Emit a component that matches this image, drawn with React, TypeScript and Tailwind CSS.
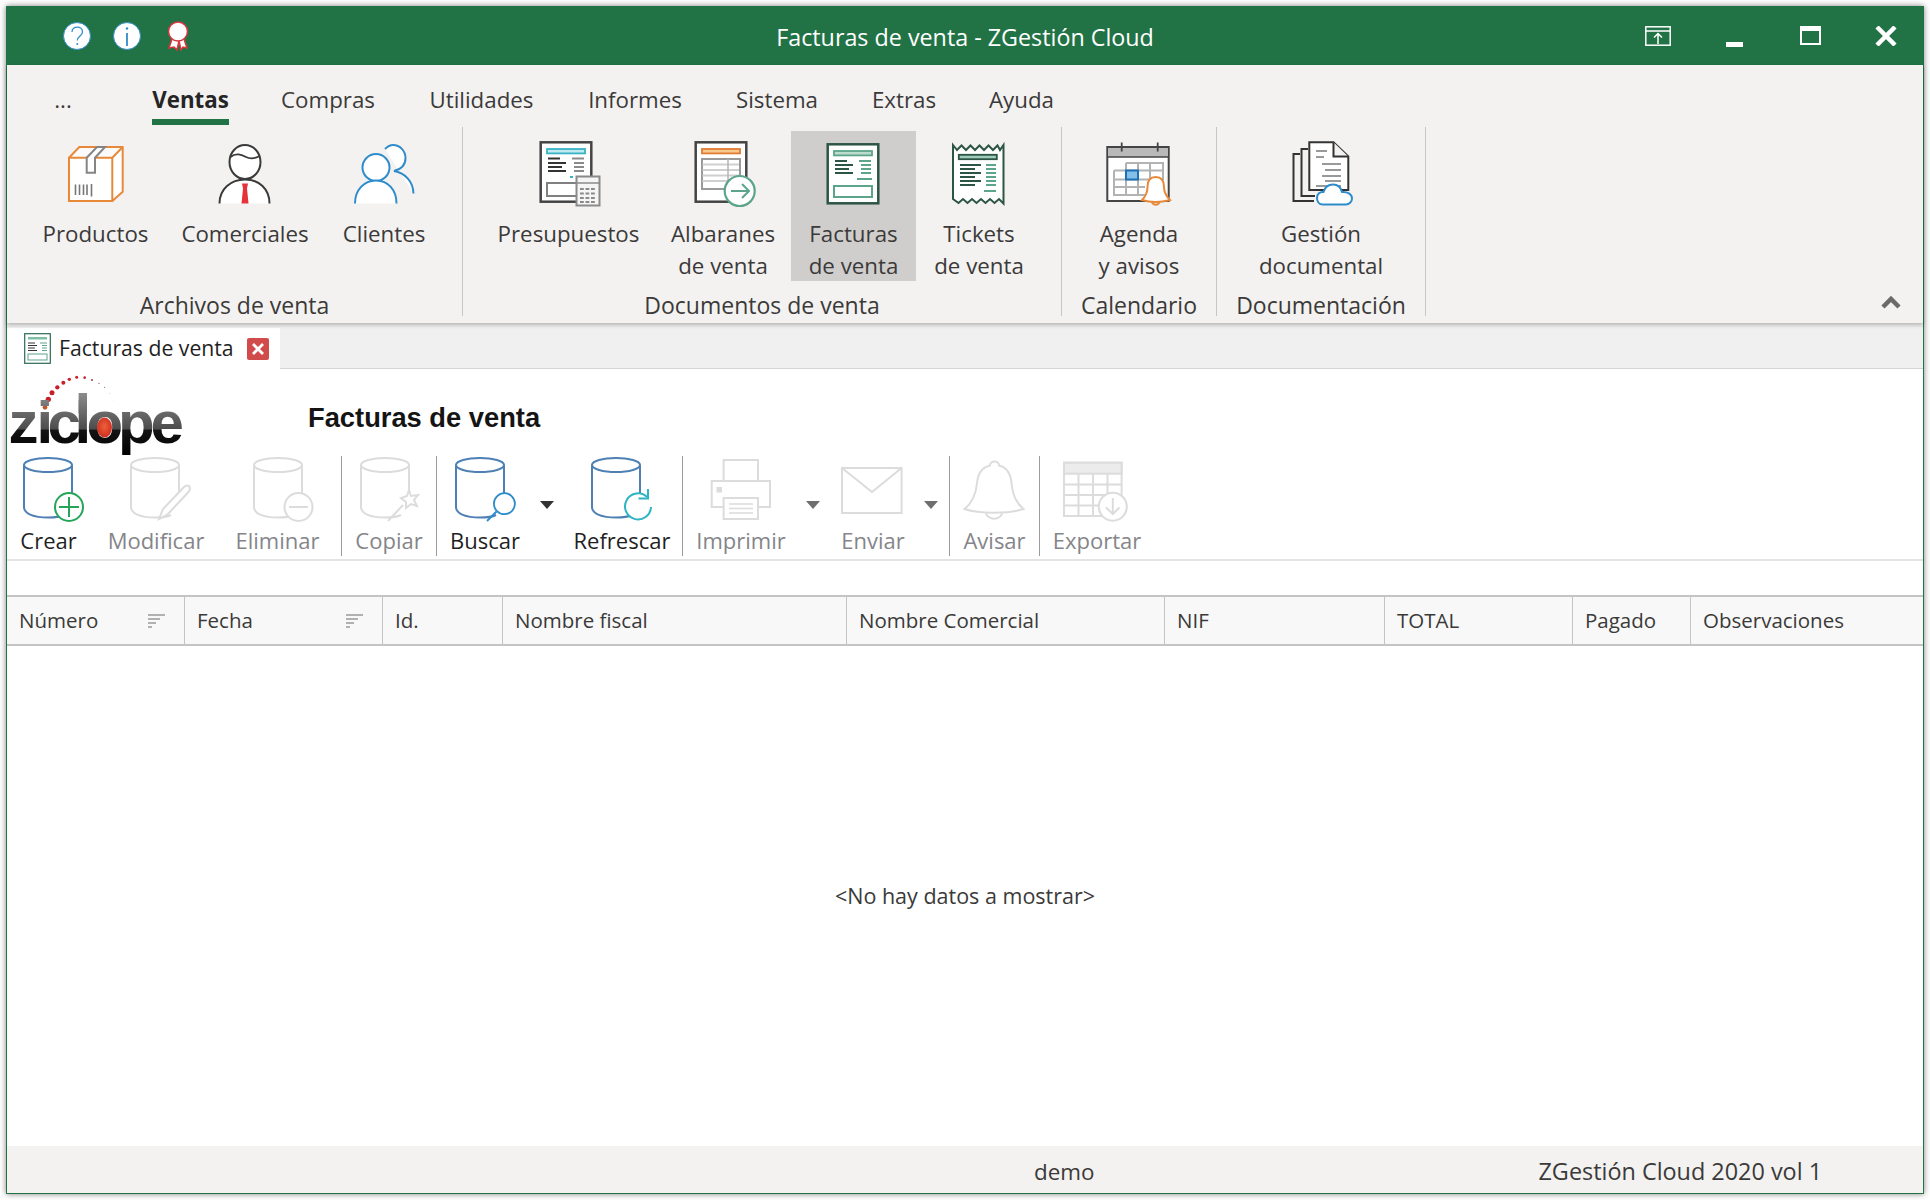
import type { ReactNode } from "react";

const INK = "#3a3a3a";
const ORANGE = "#e8893a";
const BLUE = "#2f8ccb";
const GREEN = "#5da58a";
const DARKGREEN = "#2c5545";
const TOOLBLUE = "#4f80b4";
const OFF = "#dcdcdc";

// lineas horizontales de los iconos de documento
function Lines({ items, color, w = 2 }: { items: [number, number, number][]; color: string; w?: number }) {
  return (
    <g stroke={color} strokeWidth={w}>
      {items.map(([x1, x2, y], i) => (
        <line key={i} x1={x1} x2={x2} y1={y} y2={y} />
      ))}
    </g>
  );
}

function Ico({ children }: { children: ReactNode }) {
  return (
    <svg viewBox="0 0 80 68" className="w-[80px] h-[68px] shrink-0" fill="none">
      {children}
    </svg>
  );
}

function IconBox() {
  return (
    <Ico>
      <path d="M13 17.7H56.3V61H13Z" fill="#fff" />
      <path d="M56.3 17.7 66.7 7V51.7L56.3 61Z" fill="#fff" />
      <path d="M13 17.7 23.3 7H66.7L56.3 17.7" fill="#fbfbfb" />
      <path d="M13 17.7H56.3V61H13ZM13 17.7 23.3 7H66.7V51.7L56.3 61M56.3 17.7 66.7 7" stroke={ORANGE} strokeWidth="2" />
      <path d="M30.7 17.7V32.7H39V17.7L49 7H41L30.7 17.7" stroke="#858585" strokeWidth="2" fill="#fff" />
      <path d="M19.5 44.5V55M23.5 44.5V55M27.5 44.5V55M31 44.5V55M35.5 44V56.5" stroke="#777" strokeWidth="1.6" />
    </Ico>
  );
}

function IconPerson() {
  return (
    <Ico>
      <path d="M14.5 63.5C14.5 49 26 39.5 40 39.5S64.5 49 64.5 63.5" fill="#fff" stroke={INK} strokeWidth="2" />
      <path d="M37 43.5H43L42 48.5 43.5 63.5H36.5L38 48.5Z" fill="#e5333b" />
      <ellipse cx="40" cy="22" rx="15.5" ry="17" fill="#fff" stroke={INK} strokeWidth="2" />
      <path d="M25.5 17C31 12.5 36 14.5 41 17C46 19.5 51 18 54.5 16" stroke={INK} strokeWidth="1.8" />
    </Ico>
  );
}

function IconPeople() {
  return (
    <Ico>
      <path d="M41 9C44 6 46 5 49 5C56 5 61.500 11 61.500 18C61.500 24 58 29 50 31C61 33 69 41 69.500 53.500" fill="#fff" stroke={BLUE} strokeWidth="2" />
      <circle cx="32" cy="27.500" r="13.500" fill="#fff" stroke={BLUE} strokeWidth="2" />
      <path d="M11 63.500C11 50 20 40.500 32 40.500S52.500 50 52.500 63.500" fill="#fff" stroke={BLUE} strokeWidth="2" />
    </Ico>
  );
}

function IconQuote() {
  return (
    <Ico>
      <rect x="11.700" y="2.300" width="50.600" height="59.400" fill="#fff" stroke="#444" strokeWidth="2.500" />
      <rect x="18" y="9" width="38" height="4.400" fill="#bfe9ef" stroke="#38b2c4" strokeWidth="1.800" />
      <Lines color="#333" items={[[19, 31, 18.500], [19, 37, 23], [19, 33, 27], [19, 37, 31]]} />
      <Lines color="#8a8a8a" items={[[43, 55, 18.500], [45, 55, 23], [45, 55, 27], [45, 55, 31]]} />
      <line x1="41" x2="44" y1="37" y2="37" stroke="#38b2c4" strokeWidth="2" />
      <rect x="18" y="43" width="30" height="13" fill="#fff" stroke="#808080" strokeWidth="2" />
      <rect x="47.500" y="36.500" width="23" height="29" fill="#f5f5f5" stroke="#8a8a8a" strokeWidth="2" />
      <line x1="48" x2="70" y1="43" y2="43" stroke="#8a8a8a" strokeWidth="1.500" />
      <g fill="#8a8a8a">
        {[48, 52.500, 57, 61].map((y) =>
          [51, 56.500, 62].map((x) => <rect key={`${x}-${y}`} x={x} y={y} width="3.800" height="2" />)
        )}
      </g>
    </Ico>
  );
}

function IconDelivery() {
  return (
    <Ico>
      <rect x="12.700" y="2.300" width="50.600" height="59.400" fill="#fff" stroke="#444" strokeWidth="2.500" />
      <rect x="19" y="9" width="38" height="4.400" fill="#f8c98f" stroke="#e07b30" strokeWidth="1.800" />
      <rect x="19" y="19" width="38" height="30" fill="#fff" stroke="#9a9a9a" strokeWidth="2" />
      <path d="M19.500 24.500H56M19.500 30H56M19.500 35.500H56M19.500 41H56" stroke="#cfcfcf" strokeWidth="2.200" />
      <line x1="45" x2="45" y1="19" y2="49" stroke="#b5b5b5" strokeWidth="1.500" />
      <circle cx="56.700" cy="51" r="15" fill="#fff" stroke={GREEN} strokeWidth="2.200" />
      <path d="M48 51H66M59 44 66 51 59 58" stroke={GREEN} strokeWidth="2" />
    </Ico>
  );
}

function IconInvoice() {
  return (
    <Ico>
      <rect x="13.700" y="4.300" width="50.600" height="59" fill="#fff" stroke={DARKGREEN} strokeWidth="2.500" />
      <rect x="20" y="11" width="38" height="4.400" fill="#bcdccf" stroke={GREEN} strokeWidth="1.800" />
      <Lines color={DARKGREEN} items={[[21, 33, 21], [21, 39, 25], [21, 35, 29], [21, 39, 33]]} />
      <Lines color={GREEN} items={[[45, 57, 21], [47, 57, 25], [47, 57, 29], [47, 57, 33], [43, 58, 39]]} />
      <rect x="20" y="46" width="38" height="11" fill="#fff" stroke={GREEN} strokeWidth="2" />
    </Ico>
  );
}

function IconTicket() {
  return (
    <Ico>
      <path
        d="M14 5 18 10 22.500 5.500 27 10 31.500 5.500 36 10 40.500 5.500 45 10 49.500 5.500 54 10 58.500 5.500 61 10 64.500 5V63.500L60 59 55.500 63 51 59 46.500 63 42 59 37.500 63 33 59 28.500 63 24 59 19.500 63 14 59Z"
        fill="#fff"
        stroke={DARKGREEN}
        strokeWidth="2"
      />
      <rect x="19.800" y="14.800" width="38" height="4.400" fill="#9fcdbb" stroke={DARKGREEN} strokeWidth="1.800" />
      <Lines color={DARKGREEN} items={[[21, 42, 25], [21, 36, 29], [21, 42, 33], [21, 36, 37], [21, 42, 41], [21, 36, 45]]} />
      <Lines color={GREEN} items={[[47, 57, 25], [47, 57, 29], [47, 57, 33], [47, 57, 37], [47, 57, 41], [47, 57, 45], [45, 57, 51]]} />
    </Ico>
  );
}

function IconAgenda() {
  return (
    <Ico>
      <rect x="8.300" y="7" width="61.400" height="54" fill="#fff" stroke="#444" strokeWidth="2" />
      <rect x="9" y="7.500" width="60" height="9.500" fill="#b9b9b9" />
      <line x1="8.300" x2="69.700" y1="7" y2="7" stroke="#444" strokeWidth="2" />
      <line x1="8.300" x2="69.700" y1="17" y2="17" stroke="#444" strokeWidth="1.500" />
      <path d="M22.700 2.500V11.500M58.700 2.500V11.500" stroke="#444" strokeWidth="1.800" />
      <path d="M27 23H64V30.500M15 30.500H64M15 30.500V55H46M15 39.500H50M15 47H46M27 23V55M39 23V55M51 23V40M64 23V40" stroke="#b3b3b3" strokeWidth="2" />
      <rect x="27" y="30.500" width="12" height="9" fill="#82c0ea" stroke="#1f6fb2" strokeWidth="2" />
      <path
        d="M43 60C47 56 48.500 52 48.500 47C48.500 41 51 37 56.700 37C62.500 37 65 41 65 47C65 52 67 56 71 60C62 62.500 51 62.500 43 60Z"
        fill="#fff"
        stroke={ORANGE}
        strokeWidth="2"
      />
      <path d="M53 62C54 65.500 59.500 65.500 60.500 62" stroke={ORANGE} strokeWidth="2" />
    </Ico>
  );
}

function IconDocs() {
  return (
    <Ico>
      <path d="M19 14H12.500V61H33" stroke="#333" strokeWidth="2" />
      <path d="M27 9H20.500V56H34" stroke="#333" strokeWidth="2" />
      <path d="M28.300 2.300H52.500L67.300 16.500V50H28.300Z" fill="#fff" stroke="#333" strokeWidth="2" />
      <path d="M52.500 2.300V16.500H67.300" stroke="#333" strokeWidth="2" fill="#f3f2f1" />
      <Lines color="#999" items={[[35, 46, 11], [35, 43, 17], [41, 60, 24], [44, 60, 30], [41, 60, 36], [44, 60, 41], [35, 60, 46]]} />
      <path
        d="M42 64.500C37 64.500 36 60 36 58C36 54 39 51.500 42.500 52C44 47 48 44.500 52 44.500C57 44.500 60 48 61 52C66 51.500 71 54 71 58.500C71 62 68 64.500 65 64.500Z"
        fill="#fff"
        stroke={BLUE}
        strokeWidth="2"
      />
    </Ico>
  );
}

function Cylinder({ x, color }: { x: number; color: string }) {
  return (
    <g stroke={color} strokeWidth="2" fill="none">
      <ellipse cx={x + 24} cy="8" rx="24" ry="7" />
      <path d={`M${x} 8V50C${x} 57 ${x + 10} 60.500 ${x + 24} 60.500C${x + 30} 60.500 ${x + 36} 60 ${x + 40} 58M${x + 48} 8V38`} />
    </g>
  );
}

function IconCreate() {
  return (
    <Ico>
      <Cylinder x={15} color={TOOLBLUE} />
      <circle cx="60" cy="50" r="14" fill="#fff" stroke="#25a55a" strokeWidth="2" />
      <path d="M60 40V60M50 50H70" stroke="#25a55a" strokeWidth="2" />
    </Ico>
  );
}

function IconEdit() {
  return (
    <Ico>
      <Cylinder x={15} color={OFF} />
      <path d="M43 62 47 52 68 30C70 28 73 28 73.500 30C74.500 32 74 33.500 72 35.500L51 58Z" fill="#fff" stroke={OFF} strokeWidth="2" />
    </Ico>
  );
}

function IconDelete() {
  return (
    <Ico>
      <Cylinder x={16} color={OFF} />
      <circle cx="60.500" cy="50" r="14" fill="#fff" stroke={OFF} strokeWidth="2" />
      <path d="M51 50H70" stroke={OFF} strokeWidth="2" />
    </Ico>
  );
}

function IconCopy() {
  return (
    <Ico>
      <Cylinder x={12} color={OFF} />
      <path d="M60 33 62 39 69 38 65 43 68 49 62 47 57 51 57 45 52 41 58 39Z" fill="#fff" stroke={OFF} strokeWidth="2" />
      <path d="M39 64 54 48" stroke={OFF} strokeWidth="2" />
    </Ico>
  );
}

function IconSearch() {
  return (
    <Ico>
      <Cylinder x={11} color={TOOLBLUE} />
      <circle cx="59.400" cy="46.700" r="10.500" fill="#fff" stroke={BLUE} strokeWidth="1.800" />
      <path d="M42 64 51.500 54.500" stroke={BLUE} strokeWidth="2" />
    </Ico>
  );
}

function IconRefresh() {
  return (
    <Ico>
      <Cylinder x={10} color={TOOLBLUE} />
      <path d="M65 40A13 13 0 1 0 69 50" fill="#fff" stroke="#2eb5c4" strokeWidth="2" />
      <path d="M66 32V41.500H56.500" stroke="#2eb5c4" strokeWidth="2" />
    </Ico>
  );
}

function IconPrint() {
  return (
    <Ico>
      <rect x="22.600" y="3" width="34.400" height="21" stroke={OFF} strokeWidth="2" />
      <rect x="10.700" y="24" width="58.300" height="26" stroke={OFF} strokeWidth="2" />
      <rect x="22.600" y="41" width="34.400" height="21" fill="#fff" stroke={OFF} strokeWidth="2" />
      <rect x="15.500" y="30" width="5.500" height="5.500" fill={OFF} />
      <path d="M28 47H52M28 51.500H52M28 56H52" stroke={OFF} strokeWidth="1.500" />
    </Ico>
  );
}

function IconMail() {
  return (
    <Ico>
      <rect x="9" y="11" width="59.600" height="45" stroke={OFF} strokeWidth="2" />
      <path d="M9 11 39 35 68.600 11" stroke={OFF} strokeWidth="2" />
    </Ico>
  );
}

function IconBell() {
  return (
    <Ico>
      <path
        d="M9.500 52C17 46 21 38 22 26C23 15 29 10 35 8.500C35 3 44 3 44 8.500C50 10 55.500 15 56.500 26C57.500 38 61 46 68.500 52C54 57 24 57 9.500 52Z"
        stroke={OFF}
        strokeWidth="2"
      />
      <path d="M31 56C32.500 63.500 46 63.500 47 56" stroke={OFF} strokeWidth="2" />
    </Ico>
  );
}

function IconExport() {
  return (
    <Ico>
      <rect x="7" y="5.700" width="57.600" height="53.300" stroke={OFF} strokeWidth="2" />
      <rect x="7" y="5.700" width="57.600" height="11" fill="#ececec" stroke={OFF} strokeWidth="2" />
      <path d="M7 27.500H64.600M7 38H64.600M7 48.500H42M21.500 16.700V59M36 16.700V59M50.500 16.700V36" stroke={OFF} strokeWidth="2" />
      <circle cx="55.800" cy="49.700" r="14" fill="#fff" stroke={OFF} strokeWidth="2" />
      <path d="M55.800 41V57M49 50.500 55.800 57 62.500 50.500" stroke={OFF} strokeWidth="2" />
    </Ico>
  );
}

function ZiclopeLogo() {
  const dots = [
    [135, 112, 7, "#c8552a"], [145, 88, 8, "#c8202a"], [156, 68, 7.5, "#c8202a"], [172, 52, 6.5, "#c8202a"],
    [190, 38, 6, "#c8202a"], [208, 28, 5, "#c8202a"], [230, 22, 4.5, "#c8202a"], [254, 23, 4, "#c02a30"],
    [276, 30, 3, "#a83a40"], [297, 40, 2, "#a0505a"], [314, 52, 1.5, "#444"], [328, 70, 1, "#777"], [340, 92, 0.8, "#bbb"],
  ] as const;
  return (
    <svg viewBox="0 0 182 87" className="w-[182px] h-[87px] shrink-0">
      <defs>
        <linearGradient id="zig" gradientUnits="userSpaceOnUse" x1="0" x2="0" y1="24" y2="86">
          <stop offset="0" stopColor="#8c8c8c" />
          <stop offset="0.58" stopColor="#4c4c4c" />
          <stop offset="0.6" stopColor="#141414" />
          <stop offset="1" stopColor="#000" />
        </linearGradient>
        <radialGradient id="zir" cx="0.5" cy="0.45" r="0.6">
          <stop offset="0" stopColor="#f0603a" />
          <stop offset="1" stopColor="#c92a1e" />
        </radialGradient>
      </defs>
      {dots.map(([x, y, r, c]) => (
        <circle key={x} cx={x / 3 - 7} cy={y / 3 + 1} r={r / 3} fill={c} />
      ))}
      <rect x="71.600" y="24" width="8.400" height="20" fill="url(#zig)" />
      <text
        x="1.500 29.500 40.500 67.500 79.500 111 143.500"
        y="74"
        fontFamily="'Liberation Sans', Arial, sans-serif"
        fontWeight="700"
        fontSize="60"
        fill="url(#zig)"
      >
        ziclope
      </text>
      <ellipse cx="97.500" cy="58.500" rx="7.500" ry="10" fill="url(#zir)" />
    </svg>
  );
}

function Group({ label, w, children }: { label: string; w: number; children: ReactNode }) {
  return (
    <div className="flex flex-col items-center h-[196px]" style={{ width: w }}>
      <div className="flex justify-center h-[154px] pt-1">{children}</div>
      <div className="leading-[30px] mt-[9px] text-[23px] text-[#3b3a39] whitespace-nowrap">{label}</div>
    </div>
  );
}

function Sep() {
  return <div className="w-px h-[189px] bg-[#c8c6c4] shrink-0" />;
}

function RibbonButton({ lines, w, active, children }: { lines: string[]; w: number; active?: boolean; children: ReactNode }) {
  return (
    <div
      className={`flex flex-col items-center h-[150px] pt-[9px] shrink-0 ${active ? "bg-[#cfcecd]" : ""}`}
      style={{ width: w }}
    >
      {children}
      <div className="mt-[10px] text-center leading-[32px] text-[22.3px] text-[#3b3a39] whitespace-nowrap">
        {lines.map((l) => (
          <div key={l}>{l}</div>
        ))}
      </div>
    </div>
  );
}

function ToolButton({ label, w, off, children }: { label: string; w: number; off?: boolean; children: ReactNode }) {
  return (
    <div className="flex flex-col items-center shrink-0 pt-px" style={{ width: w }}>
      {children}
      <div className={`leading-[32px] -mt-px whitespace-nowrap ${off ? "text-[#85858a]" : "text-[#1f1f1f]"}`}>{label}</div>
    </div>
  );
}

function Caret({ w, off }: { w: number; off?: boolean }) {
  return (
    <div className="flex justify-center pt-[45px] shrink-0" style={{ width: w }}>
      <svg viewBox="0 0 14 8" className="w-[14px] h-[8px]">
        <path d="M0 0H14L7 8Z" fill={off ? "#6e6e6e" : "#333"} />
      </svg>
    </div>
  );
}

function ToolSep() {
  return <div className="w-px h-[100px] bg-[#9c9c9c] shrink-0" />;
}

function SortIcon() {
  return (
    <svg viewBox="0 0 17 14" className="w-[17px] h-[14px]">
      <path d="M0 1H17M0 5H12M0 9H8M0 13H4" stroke="#999" strokeWidth="1.500" />
    </svg>
  );
}

const tabs = [
  { label: "...", ml: "ml-[34px]", w: "w-[44px]" },
  { label: "Ventas", ml: "ml-[67px]", w: "w-[77px]", active: true },
  { label: "Compras", ml: "ml-[52px]", w: "w-[94px]" },
  { label: "Utilidades", ml: "ml-[54px]", w: "w-[105px]" },
  { label: "Informes", ml: "ml-[54px]", w: "w-[94px]" },
  { label: "Sistema", ml: "ml-[54px]", w: "w-[82px]" },
  { label: "Extras", ml: "ml-[56px]", w: "w-[60px]" },
  { label: "Ayuda", ml: "ml-[54px]", w: "w-[67px]" },
];

const columns = [
  { label: "Número", w: 178, sort: true },
  { label: "Fecha", w: 198, sort: true },
  { label: "Id.", w: 120 },
  { label: "Nombre fiscal", w: 344 },
  { label: "Nombre Comercial", w: 318 },
  { label: "NIF", w: 220 },
  { label: "TOTAL", w: 188 },
  { label: "Pagado", w: 118 },
];

export default function App() {
  return (
    <div className="w-[1930px] h-[1200px] bg-white pt-[6px] pl-[6px] overflow-hidden font-['Open_Sans',sans-serif] text-[22px]">
      <div className="w-[1918px] h-[1188px] flex flex-col bg-white border-x border-b border-[#217346] shadow-[0_0_6px_rgba(0,0,0,0.5)]">
        {/* Barra de titulo */}
        <div className="grid grid-cols-[1fr_auto_1fr] items-center h-[59px] -mx-px bg-[#217346] text-white shrink-0">
          <div className="flex items-center pl-[57px]">
            <svg viewBox="0 0 28 28" className="w-[28px] h-[28px]">
              <circle cx="14" cy="14" r="13.500" fill="#fff" stroke="#2f8ccb" />
              <path d="M9 10C9 3.500 19.500 3.500 19.500 10C19.500 14 14.300 14 14.300 18.500" stroke="#2f8ccb" strokeWidth="1.300" fill="none" />
              <circle cx="14.300" cy="22" r="1" fill="#2f8ccb" />
            </svg>
            <svg viewBox="0 0 28 28" className="w-[28px] h-[28px] ml-[22px]">
              <circle cx="14" cy="14" r="13.500" fill="#fff" stroke="#2f8ccb" />
              <path d="M14 11V24" stroke="#2f8ccb" strokeWidth="1.800" />
              <circle cx="14" cy="6.500" r="1.200" fill="#2f8ccb" />
            </svg>
            <svg viewBox="0 0 22 30" className="w-[22px] h-[30px] ml-[26px]">
              <path d="M6 15 2 27 7 26 10 29 12 20 14 29 16 26 20 27 16 15Z" fill="#fff" stroke="#d9363e" strokeWidth="1.500" />
              <circle cx="11" cy="10.500" r="9.500" fill="#fff" stroke="#d9363e" strokeWidth="1.500" />
            </svg>
          </div>
          <div className="whitespace-nowrap text-[23.300px] pt-[4px]">Facturas de venta - ZGestión Cloud</div>
          <div className="flex items-center justify-end pr-[27px]">
            <svg viewBox="0 0 26 20" className="w-[26px] h-[20px] mr-[55px]" fill="none" stroke="#fff" strokeWidth="1.500">
              <rect x="0.800" y="0.800" width="24.400" height="18.400" />
              <path d="M1 5H25M13 18V8M9 11.500 13 7.500 17 11.500" />
            </svg>
            <div className="w-[17px] h-[5px] bg-white mt-[18px] mr-[57px]" />
            <div className="w-[21px] h-[19px] border-2 border-t-[5px] border-white mr-[54px]" />
            <svg viewBox="0 0 22 20" className="w-[22px] h-[20px]">
              <path d="M2 1 20 19M20 1 2 19" stroke="#fff" strokeWidth="4.500" />
            </svg>
          </div>
        </div>

        {/* Cinta */}
        <div className="h-[258px] bg-[#f3f2f1] shrink-0 shadow-[0_2px_4px_rgba(0,0,0,0.25)] relative z-10">
          <div className="flex h-[62px] items-start text-[22.3px]">
            {tabs.map((t) => (
              <div key={t.label} className={`${t.ml} ${t.w} shrink-0 flex flex-col items-center pt-[20px]`}>
                <div className={`leading-[30px] whitespace-nowrap ${t.active ? "font-bold text-[#252525]" : "text-[#3b3a39]"}`}>{t.label}</div>
                {t.active && <div className="w-full h-[6px] mt-1 bg-[#217346]" />}
              </div>
            ))}
          </div>
          <div className="flex items-start h-[196px]">
            <Group label="Archivos de venta" w={455}>
              <div className="flex">
                <RibbonButton lines={["Productos"]} w={138}>
                  <IconBox />
                </RibbonButton>
                <RibbonButton lines={["Comerciales"]} w={161}>
                  <IconPerson />
                </RibbonButton>
                <RibbonButton lines={["Clientes"]} w={117}>
                  <IconPeople />
                </RibbonButton>
              </div>
            </Group>
            <Sep />
            <Group label="Documentos de venta" w={598}>
              <div className="flex">
                <RibbonButton lines={["Presupuestos"]} w={173}>
                  <IconQuote />
                </RibbonButton>
                <RibbonButton lines={["Albaranes", "de venta"]} w={136}>
                  <IconDelivery />
                </RibbonButton>
                <RibbonButton lines={["Facturas", "de venta"]} w={125} active>
                  <IconInvoice />
                </RibbonButton>
                <RibbonButton lines={["Tickets", "de venta"]} w={126}>
                  <IconTicket />
                </RibbonButton>
              </div>
            </Group>
            <Sep />
            <Group label="Calendario" w={154}>
              <RibbonButton lines={["Agenda", "y avisos"]} w={154}>
                <IconAgenda />
              </RibbonButton>
            </Group>
            <Sep />
            <Group label="Documentación" w={208}>
              <RibbonButton lines={["Gestión", "documental"]} w={208}>
                <IconDocs />
              </RibbonButton>
            </Group>
            <Sep />
            <svg viewBox="0 0 20 14" className="w-[20px] h-[14px] ml-auto mr-[22px] mt-[168px]">
              <path d="M2 12 10 4 18 12" stroke="#6a6a6a" strokeWidth="4.500" fill="none" />
            </svg>
          </div>
        </div>

        {/* Pestañas */}
        <div className="h-[46px] pt-[5px] bg-[#f0f0f0] border-b border-[#d4d4d4] shrink-0 flex items-stretch">
          <div className="w-[273px] h-[41px] bg-white flex items-center pl-[17px] text-[#1f1f1f]">
            <svg viewBox="0 0 27 31" className="w-[27px] h-[31px] shrink-0">
              <rect x="0.700" y="0.700" width="25.600" height="29.600" fill="#fff" stroke="#2c6a55" strokeWidth="1.200" />
              <rect x="4" y="4" width="19" height="2.500" fill="#7fbfa6" />
              <path d="M4 10H11M4 12.500H13M4 15H11M4 17.500H13" stroke="#333" strokeWidth="1" />
              <path d="M16 10H23M18 12.500H23M18 15H23M18 17.500H23" stroke="#5da58a" strokeWidth="1" />
              <rect x="4" y="21" width="19" height="6" fill="#fff" stroke="#5da58a" />
            </svg>
            <span className="ml-[8px] -mt-[2px] whitespace-nowrap text-[21.200px]">Facturas de venta</span>
            <div className="ml-auto mr-[11px] w-[22px] h-[22px] bg-[#d14b4b] rounded-[2px] flex items-center justify-center shrink-0">
              <svg viewBox="0 0 12 12" className="w-[12px] h-[12px]">
                <path d="M1 1 11 11M11 1 1 11" stroke="#fff" strokeWidth="2.800" />
              </svg>
            </div>
          </div>
        </div>

        {/* Logo y titulo */}
        <div className="h-[87px] flex items-start shrink-0">
          <ZiclopeLogo />
          <h1 className="ml-[119px] mt-[33px] leading-[32px] font-['Liberation_Sans',Arial,sans-serif] font-bold text-[27.300px] text-[#141414] whitespace-nowrap">
            Facturas de venta
          </h1>
        </div>

        {/* Barra de herramientas */}
        <div className="flex h-[100px] shrink-0">
          <ToolButton label="Crear" w={83}>
            <IconCreate />
          </ToolButton>
          <ToolButton label="Modificar" w={132} off>
            <IconEdit />
          </ToolButton>
          <ToolButton label="Eliminar" w={111} off>
            <IconDelete />
          </ToolButton>
          <div className="w-2" />
          <ToolSep />
          <ToolButton label="Copiar" w={94} off>
            <IconCopy />
          </ToolButton>
          <ToolSep />
          <ToolButton label="Buscar" w={96}>
            <IconSearch />
          </ToolButton>
          <Caret w={27} />
          <div className="w-0.5" />
          <ToolButton label="Refrescar" w={120}>
            <IconRefresh />
          </ToolButton>
          <ToolSep />
          <ToolButton label="Imprimir" w={116} off>
            <IconPrint />
          </ToolButton>
          <Caret w={28} off />
          <ToolButton label="Enviar" w={92} off>
            <IconMail />
          </ToolButton>
          <Caret w={24} off />
          <div className="w-1.5" />
          <ToolSep />
          <ToolButton label="Avisar" w={89} off>
            <IconBell />
          </ToolButton>
          <ToolSep />
          <ToolButton label="Exportar" w={114} off>
            <IconExport />
          </ToolButton>
        </div>

        <div className="h-[36px] mt-[3px] border-t-2 border-[#e4e4e4] shrink-0" />

        {/* Cabecera de la tabla */}
        <div className="flex h-[51px] bg-[#f8f8f8] border-t-2 border-b-2 border-[#c4c4c4] shrink-0 text-[#3b3a39] text-[20.500px]">
          {columns.map((c) => (
            <div key={c.label} className="flex items-center justify-between pl-[12px] pr-[19px] border-r border-[#c4c4c4] shrink-0" style={{ width: c.w }}>
              <span className="whitespace-nowrap">{c.label}</span>
              {c.sort && <SortIcon />}
            </div>
          ))}
          <div className="flex items-center pl-[12px] whitespace-nowrap">Observaciones</div>
        </div>

        <div className="flex-1 flex items-center justify-center text-[#3b3a39] text-[21.500px]">&lt;No hay datos a mostrar&gt;</div>

        {/* Barra de estado */}
        <div className="h-[47px] pt-1 bg-[#f3f2f1] flex items-center shrink-0 text-[#3b3a39] text-[22.400px]">
          <span className="ml-[1027px]">demo</span>
          <span className="ml-[444px] whitespace-nowrap text-[23.400px]">ZGestión Cloud 2020 vol 1</span>
        </div>
      </div>
    </div>
  );
}
